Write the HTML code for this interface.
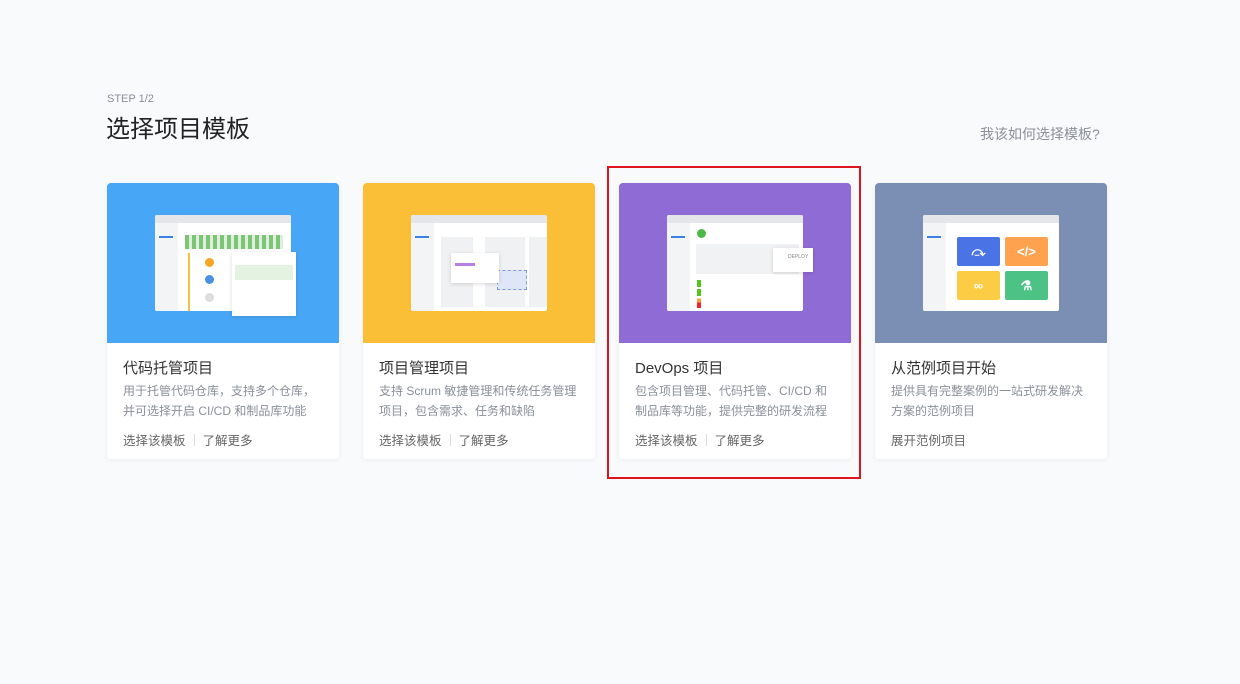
<!DOCTYPE html>
<html><head><meta charset="utf-8"><style>
*{margin:0;padding:0;box-sizing:border-box}
body{width:1240px;height:684px;background:#f9fafc;font-family:"Liberation Sans","Noto Sans CJK SC",sans-serif;position:relative;overflow:hidden}
.step{position:absolute;left:107px;top:93px;font-size:11px;color:#8a8f99}
.h1{position:absolute;left:106px;top:109px;font-size:24px;color:#222}
.help{position:absolute;left:980px;top:124px;font-size:14px;color:#8a8f99}
.card{position:absolute;top:183px;width:232px;height:276px;background:#fff;border-radius:4px;overflow:hidden;box-shadow:0 1px 6px rgba(0,0,0,.06)}
.img{height:160px;position:relative}
.t{position:absolute;left:16px;top:174px;font-size:15px;color:#333}
.d{position:absolute;left:16px;top:198px;width:196px;font-size:12px;line-height:20px;color:#8a8f99}
.l{position:absolute;left:16px;top:247px;font-size:12.5px;color:#666}
.l i{display:inline-block;width:1px;height:12px;background:#ddd;margin:0 8px;vertical-align:-1px}
.win{position:absolute;left:48px;top:32px;width:136px;height:96px;background:#fff;border-radius:2px;overflow:hidden}
.win .bar{height:8px;background:#e4e6ea}
.win .side{position:absolute;left:0;top:8px;width:23px;bottom:0;background:#f3f4f6}
.win .side b{position:absolute;left:4px;top:13px;width:14px;height:2px;background:#3b83e3}
.sq{position:absolute;width:43px;height:29px;border-radius:2px;color:#fff;font-size:13px;text-align:center;line-height:29px;font-weight:bold}
.red{position:absolute;left:607px;top:166px;width:254px;height:313px;border:2px solid #e0141e}
</style></head><body>
<div class="step">STEP 1/2</div>
<div class="h1">选择项目模板</div>
<div class="help">我该如何选择模板?</div>

<div class="card" style="left:107px"><div class="img" style="background:#48a6f7">
<div class="win"><div class="bar"></div><div class="side"><b></b></div>
<div style="position:absolute;left:30px;top:20px;width:98px;height:14px;background:repeating-linear-gradient(90deg,#7cc576 0 4px,#dfeedd 4px 7px)"></div>
<div style="position:absolute;left:50px;top:43px;width:9px;height:9px;border-radius:50%;background:#f5a623"></div>
<div style="position:absolute;left:50px;top:60px;width:9px;height:9px;border-radius:50%;background:#4a90e2"></div>
<div style="position:absolute;left:50px;top:78px;width:9px;height:9px;border-radius:50%;background:#ddd"></div>
<div style="position:absolute;left:33px;top:38px;width:2px;height:58px;background:#f5c142"></div></div>
<div style="position:absolute;left:125px;top:69px;width:64px;height:64px;background:#fff;box-shadow:0 1px 4px rgba(0,0,0,.15)"><div style="margin:13px 3px;height:15px;background:#e4f3e1"></div></div>
</div>
<div class="t">代码托管项目</div><div class="d">用于托管代码仓库，支持多个仓库，并可选择开启 CI/CD 和制品库功能</div><div class="l">选择该模板<i></i>了解更多</div></div>

<div class="card" style="left:363px"><div class="img" style="background:#fbbe37">
<div class="win"><div class="bar"></div><div class="side"><b></b></div>
<div style="position:absolute;left:30px;top:22px;width:32px;height:70px;background:#f0f1f3"></div>
<div style="position:absolute;left:74px;top:22px;width:40px;height:70px;background:#f0f1f3"></div>
<div style="position:absolute;left:118px;top:22px;width:18px;height:70px;background:#f0f1f3"></div>
<div style="position:absolute;left:86px;top:55px;width:30px;height:20px;background:#dfe6f8;border:1px dashed #7a9ae0"></div></div>
<div style="position:absolute;left:88px;top:70px;width:48px;height:30px;background:#fff;box-shadow:0 1px 4px rgba(0,0,0,.15)"><div style="margin:10px 4px;width:20px;height:3px;background:#b57ee0"></div></div>
</div>
<div class="t">项目管理项目</div><div class="d" style="width:206px">支持 Scrum 敏捷管理和传统任务管理项目，包含需求、任务和缺陷</div><div class="l">选择该模板<i></i>了解更多</div></div>

<div class="card" style="left:619px"><div class="img" style="background:#8f6bd5">
<div class="win"><div class="bar"></div><div class="side"><b></b></div>
<div style="position:absolute;left:30px;top:14px;width:9px;height:9px;border-radius:50%;background:#4cb848"></div>
<div style="position:absolute;left:29px;top:29px;width:103px;height:30px;background:#f1f2f4"></div>
<div style="position:absolute;left:30px;top:65px;width:4px;height:28px;background:linear-gradient(#52c41a 0 25%,#fff 25% 33%,#52c41a 33% 58%,#fff 58% 66%,#fa9e3c 66% 80%,#f5222d 80%)"></div></div>
<div style="position:absolute;left:154px;top:65px;width:40px;height:24px;background:#fff;box-shadow:0 1px 4px rgba(0,0,0,.15);font-size:5px;color:#888;padding:6px 0 0 15px">DEPLOY</div>
</div>
<div class="t">DevOps 项目</div><div class="d">包含项目管理、代码托管、CI/CD 和制品库等功能，提供完整的研发流程</div><div class="l">选择该模板<i></i>了解更多</div></div>

<div class="card" style="left:875px"><div class="img" style="background:#7b8fb5">
<div class="win"><div class="bar"></div><div class="side"><b></b></div>
<div class="sq" style="left:34px;top:22px;background:#4a74e6">⤼</div>
<div class="sq" style="left:82px;top:22px;background:#ffa24f">&lt;/&gt;</div>
<div class="sq" style="left:34px;top:56px;background:#fdcc45">∞</div>
<div class="sq" style="left:82px;top:56px;background:#4cc285">⚗</div></div>
</div>
<div class="t">从范例项目开始</div><div class="d">提供具有完整案例的一站式研发解决方案的范例项目</div><div class="l">展开范例项目</div></div>

<div class="red"></div>
</body></html>
